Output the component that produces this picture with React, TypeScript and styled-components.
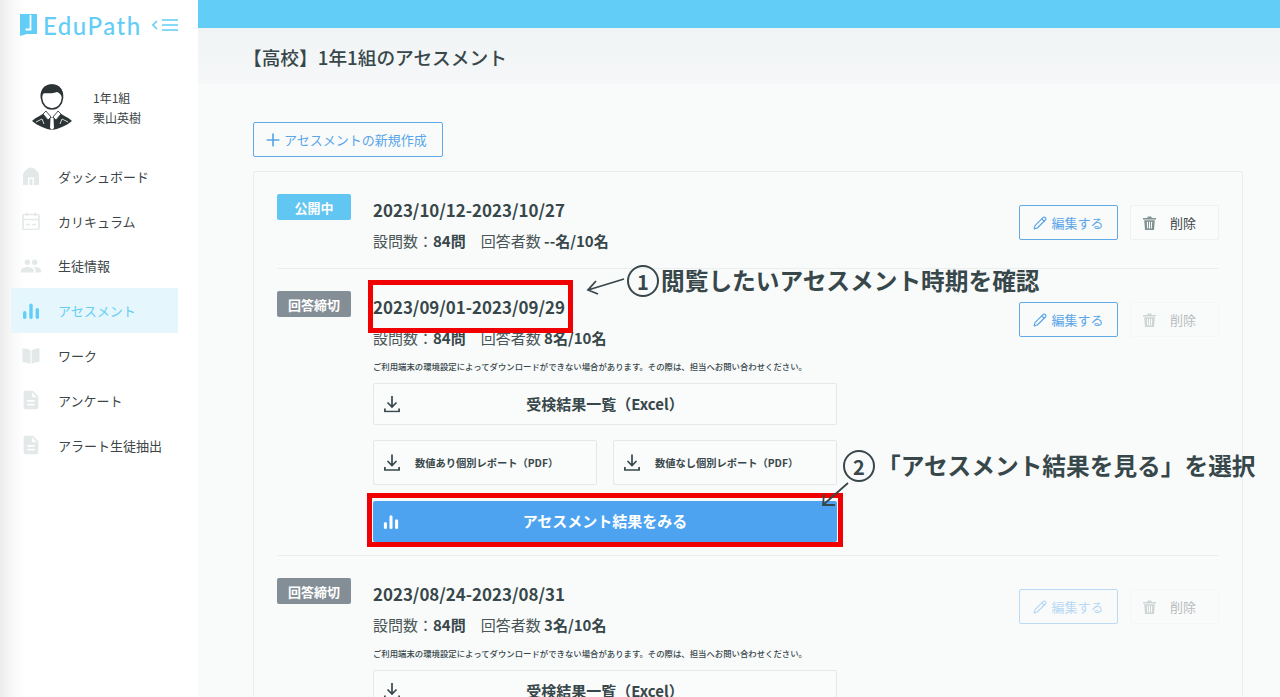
import styled, { createGlobalStyle } from "styled-components";
import { Pencil, Plus } from "lucide-react";
import { MdDescription, MdPeople } from "react-icons/md";

const GlobalStyle = createGlobalStyle`
  html, body {
    margin: 0;
    height: 100%;
    overflow: hidden;
    background: #f9fbfb;
    font-family: "Noto Sans CJK JP", "Noto Sans", sans-serif;
    color: #37474a;
  }
  * { box-sizing: border-box; }
`;

const HomeIcon = () => (
  <svg width="18" height="18" viewBox="0 0 18 18" fill="currentColor">
    <path d="M9 0.5 C12 0.5 17 5 17 8 V18 H12 V10.5 H6 V18 H1 V8 C1 5 6 0.5 9 0.5 Z" />
    <rect x="7.5" y="12" width="3" height="6" />
  </svg>
);

const CalendarIcon = () => (
  <svg width="18" height="18" viewBox="0 0 18 18" fill="none" stroke="currentColor" strokeWidth="1.6">
    <rect x="1" y="2.5" width="16" height="15" rx="1.5" />
    <path d="M1 7.5 H17 M5 0.5 V4 M13 0.5 V4 M4 12.5 H8 M10 12.5 H14" />
  </svg>
);

const BarsIcon = ({ size = 18 }: { size?: number }) => (
  <svg width={size} height={size} viewBox="0 0 18 18" fill="currentColor">
    <rect x="1" y="9" width="3.4" height="8" rx="1.7" />
    <rect x="7.3" y="1.5" width="3.4" height="15.5" rx="1.7" />
    <rect x="13.6" y="6" width="3.4" height="11" rx="1.7" />
  </svg>
);

const BookIcon = () => (
  <svg width="18" height="18" viewBox="0 0 18 18" fill="currentColor">
    <path d="M0.5 1.5 C3.5 1.5 6.5 2 8.4 3.2 V17 C6.5 15.8 3.5 15.3 0.5 15.3 Z" />
    <path d="M17.5 1 C14.5 1.5 11.5 2 9.6 3.2 V17 C11.5 15.8 14.5 15.3 17.5 14.8 Z" />
  </svg>
);

const DocIcon = () => <MdDescription size={22} style={{ margin: "0 -2px" }} />;

const DownloadIcon = () => (
  <svg width="16" height="17" viewBox="0 0 16 17" fill="none" stroke="#37474a" strokeWidth="1.7">
    <path d="M8 0.5 V11 M3.5 7 L8 11.500 L12.500 7 M0.900 13 V16 H15.100 V13" />
  </svg>
);

const TrashIcon = () => (
  <svg width="13" height="14" viewBox="0 0 13 14" fill="currentColor">
    <path d="M0 2 H4.200 L4.800 0.500 H8.200 L8.800 2 H13 V3.500 H0 Z" />
    <path d="M1.200 4.300 H11.800 L11 14 H2 Z M3.800 5.800 L4.200 12.500 H5.200 L4.900 5.800 Z M6 5.800 V12.500 H7 V5.800 Z M8.100 5.800 L7.800 12.500 H8.800 L9.200 5.800 Z" fillRule="evenodd" />
  </svg>
);

const LogoMark = () => (
  <svg width="17" height="22" viewBox="0 0 17 22">
    <path d="M0 0 H17 V20 H7 L0 22 Z" fill="#62cdf6" />
    <path d="M10.500 1 V15.500 H5.500" fill="none" stroke="#fff" strokeWidth="1.800" />
  </svg>
);

const MenuToggle = () => (
  <svg width="27" height="14" viewBox="0 0 27 14" fill="none" stroke="#62cdf6" strokeWidth="1.6">
    <path d="M5 3 L1 7 L5 11 M10 2 H26 M10 7 H26 M10 12 H26" />
  </svg>
);

const Avatar = () => (
  <svg width="40" height="46" viewBox="0 0 40 46">
    <path d="M20 1 C11 1 9 8 9.500 14 C10 20 14 25 20 25 C26 25 30 20 30.500 14 C31 8 28 1 20 1 Z" fill="#fff" stroke="#2c3335" strokeWidth="1.6" />
    <path d="M9 15 C7 6 13 0.500 20 0.500 C28 0.500 32 6 30.500 15 C29.500 11 28 9 25 8 C20 10 14 9 11.500 9.500 C10 11 9.500 13 9 15 Z" fill="#2c3335" />
    <path d="M0 37 C4 33 10 31 14 28 L20 34 L26 28 C30 31 36 33 40 37 C34 42 26 45 20 46 C14 45 6 42 0 37 Z" fill="#2c3335" />
    <path d="M14 27 L19 33 L16 36 L11 30 Z M26 27 L21 33 L24 36 L29 30 Z" fill="#fff" stroke="#2c3335" strokeWidth="0.8" />
    <path d="M18.500 34 H21.500 L22 44 L20 46 L18 44 Z" fill="#fff" />
    <path d="M4 38 L10 35 L12 40 M36 38 L30 35 L28 40" fill="none" stroke="#fff" strokeWidth="0.8" />
  </svg>
);

const navItems = [
  { label: "ダッシュボード", icon: <HomeIcon /> },
  { label: "カリキュラム", icon: <CalendarIcon /> },
  { label: "生徒情報", icon: <MdPeople size={22} style={{ margin: "0 -2px" }} /> },
  { label: "アセスメント", icon: <BarsIcon />, active: true },
  { label: "ワーク", icon: <BookIcon /> },
  { label: "アンケート", icon: <DocIcon /> },
  { label: "アラート生徒抽出", icon: <DocIcon /> },
];

const assessments = [
  { status: "公開中", open: true, period: "2023/10/12-2023/10/27", answered: "--名/10名" },
  { status: "回答締切", period: "2023/09/01-2023/09/29", answered: "8名/10名", closed: true, canEdit: true, full: true },
  { status: "回答締切", period: "2023/08/24-2023/08/31", answered: "3名/10名", closed: true },
];

export default function App() {
  return (
    <>
      <GlobalStyle />
      <Page>
        <Sidebar>
          <LogoRow>
            <LogoMark />
            <LogoText>EduPath</LogoText>
            <MenuToggle />
          </LogoRow>
          <Profile>
            <Avatar />
            <ProfileText>
              <span>1年1組</span>
              <span>栗山英樹</span>
            </ProfileText>
          </Profile>
          <Nav>
            {navItems.map((item) => (
              <NavItem key={item.label} $active={item.active}>
                <NavIcon $active={item.active}>{item.icon}</NavIcon>
                {item.label}
              </NavItem>
            ))}
          </Nav>
        </Sidebar>
        <Main>
          <TopBar />
          <PageHead>【高校】1年1組のアセスメント</PageHead>
          <Content>
            <NewButton>
              <Plus size={20} strokeWidth={2} />
              アセスメントの新規作成
            </NewButton>
            <Card>
              {assessments.map((a) => (
                <Row key={a.period} $full={a.full}>
                  <Badge $open={a.open}>{a.status}</Badge>
                  <Body>
                    <Period>{a.period}</Period>
                    <Meta>
                      設問数：<b>84問</b>　回答者数 <b>{a.answered}</b>
                    </Meta>
                    {a.closed && (
                      <>
                        <Notice>
                          ご利用端末の環境設定によってダウンロードができない場合があります。その際は、担当へお問い合わせください。
                        </Notice>
                        <DownloadGrid>
                          <WideButton>
                            <ButtonIcon>
                              <DownloadIcon />
                            </ButtonIcon>
                            受検結果一覧（Excel）
                          </WideButton>
                          {a.full && (
                            <>
                              <HalfButton>
                                <DownloadIcon />
                                数値あり個別レポート（PDF）
                              </HalfButton>
                              <HalfButton>
                                <DownloadIcon />
                                数値なし個別レポート（PDF）
                              </HalfButton>
                              <ResultButton>
                                <ButtonIcon>
                                  <BarsIcon size={16} />
                                </ButtonIcon>
                                アセスメント結果をみる
                              </ResultButton>
                            </>
                          )}
                        </DownloadGrid>
                      </>
                    )}
                  </Body>
                  <Actions>
                    <EditButton $dim={a.closed && !a.canEdit}>
                      <Pencil size={14} strokeWidth={2} />
                      編集する
                    </EditButton>
                    <DeleteButton $dim={a.closed}>
                      <TrashIcon />
                      <span>削除</span>
                    </DeleteButton>
                  </Actions>
                </Row>
              ))}
            </Card>
          </Content>
        </Main>

        <RedBox $x={368} $y={280} $w={205} $h={53} />
        <RedBox $x={367} $y={493} $w={476} $h={54} />
        <Arrow $x={584} $y={274} width="44" height="22" viewBox="0 0 44 22">
          <path d="M40 5 L4 16 M12 7 L4 16 L14 20" />
        </Arrow>
        <Arrow $x={818} $y={480} width="34" height="30" viewBox="0 0 34 30">
          <path d="M30 3 L5 25 M6 14 L5 25 L17 25" />
        </Arrow>
        <Callout $x={627} $y={265}>
          <Num>1</Num>
          <CalloutText>閲覧したいアセスメント時期を確認</CalloutText>
        </Callout>
        <Callout $x={843} $y={450}>
          <Num>2</Num>
          <CalloutText>「アセスメント結果を見る」を選択</CalloutText>
        </Callout>
      </Page>
    </>
  );
}

const Page = styled.div`
  position: relative;
  display: flex;
  width: 1280px;
  height: 697px;
  overflow: hidden;
`;

const Sidebar = styled.aside`
  flex: 0 0 198px;
  background: linear-gradient(90deg, #ececec 0, #f8f8f8 12px, #fff 24px);
`;

const LogoRow = styled.div`
  display: flex;
  align-items: center;
  height: 50px;
  padding-left: 20px;
`;

const LogoText = styled.span`
  margin: 0 10px 0 6px;
  font-family: "Lato", sans-serif;
  font-size: 24px;
  font-weight: 500;
  letter-spacing: 1.500px;
  color: #62cdf6;
`;

const Profile = styled.div`
  display: flex;
  align-items: center;
  gap: 21px;
  margin-top: 34px;
  padding-left: 32px;
`;

const ProfileText = styled.div`
  display: flex;
  flex-direction: column;
  gap: 1px;
  font-size: 12px;
  line-height: 19px;
  color: #3c4547;
`;

const Nav = styled.nav`
  display: flex;
  flex-direction: column;
  margin-top: 24px;
  padding-left: 11px;
`;

const NavItem = styled.div<{ $active?: boolean }>`
  display: flex;
  align-items: center;
  gap: 18px;
  width: 167px;
  height: 44.8px;
  padding-left: 11px;
  font-size: 13px;
  white-space: nowrap;
  color: ${(p) => (p.$active ? "#62cdf6" : "#3c4547")};
  background: ${(p) => (p.$active ? "#e5f7fd" : "transparent")};
`;

const NavIcon = styled.span<{ $active?: boolean }>`
  display: flex;
  color: ${(p) => (p.$active ? "#62cdf6" : "#e3e8e9")};
`;

const Main = styled.main`
  flex: 1;
  min-width: 0;
`;

const TopBar = styled.div`
  height: 28px;
  background: #62cdf6;
`;

const PageHead = styled.h1`
  display: flex;
  align-items: center;
  height: 56px;
  margin: 0;
  padding: 1px 0 0 45px;
  font-size: 18.700px;
  font-weight: 500;
  background: linear-gradient(180deg, #f1f4f5, #f5f7f8);
`;

const Content = styled.div`
  padding: 38px 37px 0 55px;
`;

const NewButton = styled.button`
  display: flex;
  align-items: center;
  gap: 1px;
  width: 190px;
  height: 35px;
  padding: 0 9px;
  border: 1px solid #62a9e8;
  border-radius: 2px;
  background: transparent;
  font: inherit;
  font-size: 13px;
  color: #5aa5e8;
  white-space: nowrap;
`;

const Card = styled.section`
  margin-top: 14px;
  padding: 0 23px;
  border: 1px solid #e9eced;
  border-radius: 2px;
`;

const Row = styled.article<{ $full?: boolean }>`
  display: flex;
  align-items: flex-start;
  min-height: 97px;
  height: ${(p) => (p.$full ? "287px" : "auto")};
  padding-top: 22px;
  border-bottom: 1px solid #ecefef;
  &:last-child {
    border-bottom: 0;
  }
`;

const Badge = styled.span<{ $open?: boolean }>`
  flex: 0 0 74px;
  display: flex;
  align-items: center;
  justify-content: center;
  height: 26px;
  margin-right: 22px;
  border-radius: 2px;
  font-size: 13px;
  font-weight: 700;
  color: #fff;
  background: ${(p) => (p.$open ? "#62c6f2" : "#848e96")};
`;

const Body = styled.div`
  flex: 0 0 464px;
`;

const Period = styled.div`
  margin-top: 5px;
  font-size: 16.900px;
  line-height: 22px;
  font-weight: 700;
  white-space: nowrap;
`;

const Meta = styled.div`
  margin-top: 9px;
  font-size: 15px;
  line-height: 22px;
  color: #4a5557;
  white-space: nowrap;
  b {
    color: #37474a;
  }
`;

const Notice = styled.p`
  margin: 11px 0 0;
  font-size: 8.400px;
  font-weight: 500;
  line-height: 12px;
  white-space: nowrap;
`;

const DownloadGrid = styled.div`
  display: grid;
  grid-template-columns: 224px 224px;
  justify-content: space-between;
  margin-top: 11px;
  row-gap: 15px;
`;

const OutlineButton = styled.button`
  display: flex;
  align-items: center;
  border: 1px solid #e5e8e9;
  border-radius: 2px;
  background: #fafbfb;
  color: #37474a;
  font: inherit;
`;

const WideButton = styled(OutlineButton)`
  position: relative;
  grid-column: 1 / -1;
  justify-content: center;
  height: 42px;
  padding: 0 0 2px;
  font-size: 15px;
  font-weight: 700;
`;

const ButtonIcon = styled.span`
  position: absolute;
  left: 10px;
  top: 50%;
  transform: translateY(-50%);
  display: flex;
`;

const HalfButton = styled(OutlineButton)`
  gap: 15px;
  height: 45px;
  padding: 0 10px;
  font-size: 10.250px;
  font-weight: 700;
  white-space: nowrap;
`;

const ResultButton = styled(WideButton)`
  height: 41px;
  border: 0;
  background: #4ea3f0;
  color: #fff;
  margin-top: 1px;
`;

const Actions = styled.div`
  display: flex;
  gap: 12px;
  margin-left: auto;
  margin-top: 11px;
`;

const EditButton = styled.button<{ $dim?: boolean }>`
  display: flex;
  align-items: center;
  justify-content: center;
  gap: 4px;
  width: 99px;
  height: 35px;
  border: 1px solid #62a9e8;
  border-radius: 2px;
  background: transparent;
  font: inherit;
  font-size: 13px;
  color: #5aa5e8;
  opacity: ${(p) => (p.$dim ? 0.4 : 1)};
`;

const DeleteButton = styled.button<{ $dim?: boolean }>`
  display: flex;
  align-items: center;
  gap: 14px;
  width: 89px;
  height: 35px;
  padding: 0 12px;
  border: 1px solid #eef0f1;
  border-radius: 2px;
  background: #fafbfb;
  font: inherit;
  font-size: 13px;
  color: #3c4547;
  opacity: ${(p) => (p.$dim ? 0.35 : 1)};
  svg {
    color: #7f9291;
  }
`;

const RedBox = styled.div<{ $x: number; $y: number; $w: number; $h: number }>`
  position: absolute;
  left: ${(p) => p.$x}px;
  top: ${(p) => p.$y}px;
  width: ${(p) => p.$w}px;
  height: ${(p) => p.$h}px;
  border: 5px solid #f00000;
`;

const Arrow = styled.svg<{ $x: number; $y: number }>`
  position: absolute;
  left: ${(p) => p.$x}px;
  top: ${(p) => p.$y}px;
  fill: none;
  stroke: #37474a;
  stroke-width: 1.8;
`;

const Callout = styled.div<{ $x: number; $y: number }>`
  position: absolute;
  left: ${(p) => p.$x}px;
  top: ${(p) => p.$y}px;
  display: flex;
  align-items: center;
  white-space: nowrap;
  color: #37474a;
`;

const Num = styled.span`
  display: flex;
  align-items: center;
  justify-content: center;
  width: 32px;
  height: 32px;
  border: 2px solid #37474a;
  border-radius: 50%;
  font-size: 20px;
  font-weight: 700;
`;

const CalloutText = styled.span`
  margin-left: 2px;
  margin-top: -3px;
  font-size: 23.700px;
  font-weight: 700;
  line-height: 32px;
`;
